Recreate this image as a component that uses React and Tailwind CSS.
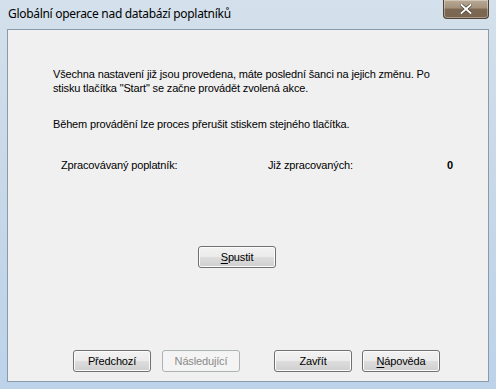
import React from "react";

function Btn({ children, disabled, className = "" }) {
  return (
    <div
      className={
        "flex h-[22px] w-[78px] items-center justify-center rounded-[3px] border text-[11px] " +
        (disabled
          ? "border-[#adb2b5] bg-[#f4f4f4] text-[#8a8a8a] "
          : "border-[#707070] bg-[linear-gradient(to_bottom,#f2f2f2_0%,#ebebeb_50%,#dddddd_51%,#cfcfcf_100%)] text-black shadow-[inset_0_0_0_1px_#fcfcfc] ") +
        className
      }
    >
      {children}
    </div>
  );
}

export default function App() {
  return (
    <div
      className="relative flex h-[389px] w-[496px] flex-col overflow-hidden bg-[linear-gradient(to_bottom,#d4e1ec_0%,#c9d9e8_40%,#bcd3ea_100%)]"
      style={{ fontFamily: '"Liberation Sans", Arial, sans-serif' }}
    >
      {/* title bar */}
      <div className="flex h-[29px] shrink-0 items-start">
        <div
          className="ml-[8px] mt-[6px] text-[12px] leading-[16px] tracking-[-0.3px] text-black"
          style={{ fontFamily: '"Noto Sans", "Open Sans", sans-serif' }}
        >
          Globální operace nad databází poplatníků
        </div>
        <div className="flex-1" />
        <div className="mr-[7px] flex h-[19px] w-[46px] items-center justify-center rounded-b-[4px] border border-t-0 border-[#4f4336] bg-[linear-gradient(to_bottom,#b9aa95_0%,#a3917b_45%,#7d6953_50%,#7a6650_100%)] shadow-[inset_0_0_0_1px_rgba(255,255,255,0.35)]">
          <svg width="12" height="10" viewBox="0 0 12 10">
            <path d="M1.5 1 L10.5 9 M10.5 1 L1.5 9" stroke="#3b3026" strokeWidth="3.2" strokeLinecap="square" />
            <path d="M1.5 1 L10.5 9 M10.5 1 L1.5 9" stroke="#ffffff" strokeWidth="2" strokeLinecap="square" />
          </svg>
        </div>
      </div>

      {/* client area */}
      <div className="mx-[7px] mb-[7px] flex flex-1 flex-col border border-[#8b9aab] bg-[#f0f0f0] text-[11px] tracking-[-0.15px] text-black">
        <div className="pl-[45px] pr-[40px] pt-[37px] leading-[14px]">
          <div>
            Všechna nastavení již jsou provedena, máte poslední šanci na jejich změnu. Po
            <br />
            stisku tlačítka "Start" se začne provádět zvolená akce.
          </div>
          <div className="mt-[22px]">Během provádění lze proces přerušit stiskem stejného tlačítka.</div>
        </div>

        <div className="mt-[27px] flex h-[14px] items-center pl-[53px] leading-[14px]">
          <div className="w-[207px]">Zpracovávaný poplatník:</div>
          <div className="w-[178px]">Již zpracovaných:</div>
          <div className="w-[7px] text-right font-bold">0</div>
        </div>

        <div className="mt-[74px] flex pl-[190px]">
          <Btn>
            <span className="underline underline-offset-2">S</span>pustit
          </Btn>
        </div>

        <div className="flex-1" />

        <div className="mb-[9px] flex pl-[65px]">
          <Btn>Předchozí</Btn>
          <Btn disabled className="ml-[11px]">
            Následující
          </Btn>
          <Btn className="ml-[34px]">Zavřít</Btn>
          <Btn className="ml-[10px]">
            <span className="underline underline-offset-2">N</span>ápověda
          </Btn>
        </div>
      </div>
    </div>
  );
}
